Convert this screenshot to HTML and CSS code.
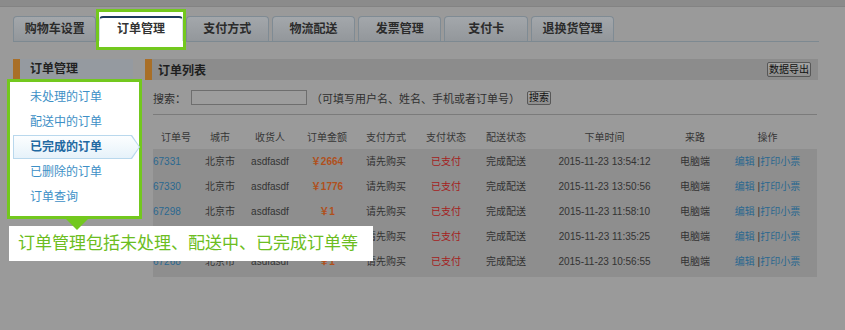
FILE: index.html
```html
<!DOCTYPE html>
<html lang="zh-CN">
<head>
    <meta charset="UTF-8">
    <title>订单管理</title>
    <link rel="stylesheet" href="styles.css">
</head>
<body>
    <div class="topbar"></div>

    <ul class="tabs">
        <li class="tab">购物车设置</li>
        <li class="tab-hl"><div class="tab on">订单管理</div></li>
        <li class="tab">支付方式</li>
        <li class="tab">物流配送</li>
        <li class="tab">发票管理</li>
        <li class="tab">支付卡</li>
        <li class="tab">退换货管理</li>
    </ul>

    <div class="main">
        <div class="side">
            <div class="side-hd">订单管理</div>
            <div class="guide">
                <ul class="menu">
                    <li><span>未处理的订单</span></li>
                    <li><span>配送中的订单</span></li>
                    <li class="cur"><span>已完成的订单</span></li>
                    <li><span>已删除的订单</span></li>
                    <li><span>订单查询</span></li>
                </ul>
                <div class="tip">订单管理包括未处理、配送中、已完成订单等</div>
            </div>
        </div>

        <div class="content">
            <div class="panel-hd">
                <span class="title">订单列表</span>
                <button class="btn">数据导出</button>
            </div>

            <div class="search">
                <span>搜索：</span>
                <input type="text">
                <span class="hint">（可填写用户名、姓名、手机或者订单号）</span>
                <button class="btn">搜索</button>
            </div>
            <div class="rule"></div>

            <table class="orders">
                <colgroup>
                    <col style="width:46px"><col style="width:42px"><col style="width:58px"><col style="width:56px"><col style="width:62px">
                    <col style="width:58px"><col style="width:62px"><col style="width:135px"><col style="width:46px"><col style="width:99px">
                </colgroup>
                <thead>
                    <tr>
                        <th>订单号</th><th>城市</th><th>收货人</th><th>订单金额</th><th>支付方式</th>
                        <th>支付状态</th><th>配送状态</th><th>下单时间</th><th>来路</th><th>操作</th>
                    </tr>
                </thead>
                <tbody>
                    <tr>
                        <td class="id"><a>67331</a></td><td>北京市</td><td>asdfasdf</td><td class="amt">￥2664</td><td>请先购买</td>
                        <td class="paid">已支付</td><td>完成配送</td><td>2015-11-23 13:54:12</td><td>电脑端</td>
                        <td class="ops"><a>编辑</a> |<a>打印小票</a></td>
                    </tr>
                    <tr>
                        <td class="id"><a>67330</a></td><td>北京市</td><td>asdfasdf</td><td class="amt">￥1776</td><td>请先购买</td>
                        <td class="paid">已支付</td><td>完成配送</td><td>2015-11-23 13:50:56</td><td>电脑端</td>
                        <td class="ops"><a>编辑</a> |<a>打印小票</a></td>
                    </tr>
                    <tr>
                        <td class="id"><a>67298</a></td><td>北京市</td><td>asdfasdf</td><td class="amt">￥1</td><td>请先购买</td>
                        <td class="paid">已支付</td><td>完成配送</td><td>2015-11-23 11:58:10</td><td>电脑端</td>
                        <td class="ops"><a>编辑</a> |<a>打印小票</a></td>
                    </tr>
                    <tr>
                        <td class="id"><a>67269</a></td><td>北京市</td><td>asdfasdf</td><td class="amt">￥1</td><td>请先购买</td>
                        <td class="paid">已支付</td><td>完成配送</td><td>2015-11-23 11:35:25</td><td>电脑端</td>
                        <td class="ops"><a>编辑</a> |<a>打印小票</a></td>
                    </tr>
                    <tr>
                        <td class="id"><a>67268</a></td><td>北京市</td><td>asdfasdf</td><td class="amt">￥1</td><td>请先购买</td>
                        <td class="paid">已支付</td><td>完成配送</td><td>2015-11-23 10:56:55</td><td>电脑端</td>
                        <td class="ops"><a>编辑</a> |<a>打印小票</a></td>
                    </tr>
                </tbody>
            </table>
        </div>
    </div>
</body>
</html>
```

FILE: styles.css
```css
body {
    margin: 0;
    background: #9a9a9a;
    font-family: "Liberation Sans", "Noto Sans CJK SC", sans-serif;
    font-size: 12px;
    color: #2e2e2e;
}

.topbar {
    height: 6px;
    background: #8b8b8b;
    border-bottom: 1px solid #838383;
}

/* Tabs */
.tabs {
    list-style: none;
    display: flex;
    gap: 3px;
    width: 806px;
    height: 25px;
    margin: 9px 0 0 13px;
    padding: 0;
    border-bottom: 1px solid #7d8991;
}

.tab {
    width: 83.3px;
    height: 25px;
    box-sizing: border-box;
    border: 1px solid #7f8b94;
    border-bottom: 0;
    border-radius: 4px 4px 0 0;
    background: linear-gradient(#a3a7ab, #93979b);
    text-align: center;
    line-height: 24px;
    font-weight: bold;
    color: #2b2b2b;
}

/* highlighted tab of the guide */
.tab-hl {
    position: relative;
    z-index: 2;
    margin: -7px -3px -9px;
    padding: 4px 0 6px;
    border: 3px solid #73c81e;
    background: #fff;
}

.tab.on {
    background: #fff;
    border-color: #d8dfe5;
    border-top: 2px solid #1d3b5e;
    line-height: 23px;
    color: #333;
}

/* Layout */
.main {
    display: flex;
    gap: 12px;
    margin: 17px 0 0 13px;
}

.side {
    width: 120px;
    flex: none;
}

.side-hd {
    height: 21px;
    line-height: 21px;
    padding-left: 10px;
    border-left: 7px solid #a96f27;
    background: #959aa0;
    font-weight: bold;
    color: #222;
}

.guide {
    position: relative;
    z-index: 5;
    margin: -1px -9px 0 -6px;
    padding: 3px 0 6px;
    border: 3px solid #73c81e;
    background: #fff;
}

.guide::after {
    content: '';
    position: absolute;
    left: 56px;
    top: calc(100% + 3px);
    border-left: 11px solid transparent;
    border-right: 11px solid transparent;
    border-top: 11px solid #73c81e;
}

.menu {
    list-style: none;
    margin: 0;
    padding: 0;
}

.menu li {
    position: relative;
    width: 127px;
    height: 24px;
    box-sizing: border-box;
    margin: 0 0 1px 3px;
    padding-left: 17px;
    line-height: 24px;
    color: #3d8fc6;
}

.menu li span {
    position: relative;
}

.menu li.cur {
    font-weight: bold;
    color: #1f69a2;
    background: #b9d8ed;
    clip-path: polygon(0 0, calc(100% - 8px) 0, 100% 50%, calc(100% - 8px) 100%, 0 100%);
}

.menu li.cur::before {
    content: '';
    position: absolute;
    inset: 1px;
    background: linear-gradient(#fcfeff, #e6f2fa);
    clip-path: polygon(0 0, calc(100% - 8px) 0, 100% 50%, calc(100% - 8px) 100%, 0 100%);
}

.tip {
    position: absolute;
    left: -1px;
    top: calc(100% + 10px);
    width: 364px;
    height: 35px;
    box-sizing: border-box;
    padding-left: 9px;
    background: #fff;
    line-height: 35px;
    font-size: 17px;
    color: #6cbd21;
    white-space: nowrap;
}

/* Order list */
.content {
    width: 673px;
    flex: none;
}

.panel-hd {
    display: flex;
    align-items: center;
    justify-content: space-between;
    height: 21px;
    padding: 0 7px 0 6px;
    border-left: 7px solid #a96f27;
    background: #8c8c8c;
}

.panel-hd .title {
    font-weight: bold;
    color: #1e1e1e;
}

.btn {
    height: 15px;
    padding: 0 1px;
    border: 1px solid #575757;
    border-radius: 2px;
    background: linear-gradient(#a4a4a4, #8e8e8e);
    font-family: "Liberation Sans", "Noto Sans CJK SC", sans-serif;
    font-size: 10px;
    line-height: 12px;
    color: #111;
}

.search {
    display: flex;
    align-items: center;
    height: 15px;
    margin: 10px 0 0 8px;
    font-size: 11px;
    color: #2f2f2f;
}

.search input {
    width: 116px;
    height: 15px;
    box-sizing: border-box;
    margin: 0 4px 0 5px;
    padding: 0;
    border: 1px solid #6e6e6e;
    background: #9d9d9d;
}

.search .hint {
    margin-right: 7px;
}

.search .btn {
    height: 14px;
}

.rule {
    margin: 9px 1px 0 8px;
    border-top: 1px solid #7b7b7b;
}

.orders {
    width: 664px;
    margin: 9px 0 0 8px;
    table-layout: fixed;
    border-collapse: collapse;
    font-size: 10px;
}

.orders th {
    height: 25px;
    padding: 0;
    font-weight: normal;
    color: #363636;
    text-align: center;
}

.orders tbody {
    background: #8e8e8e;
}

.orders td {
    height: 25px;
    padding: 0;
    line-height: 25px;
    vertical-align: top;
    text-align: center;
    color: #333;
    white-space: nowrap;
}

.orders tr:last-child td {
    height: 28px;
}

.orders td.id {
    text-align: left;
}

.orders td.id a,
.orders td.ops a {
    color: #2a6890;
}

.orders td.amt {
    font-weight: bold;
    color: #b0501c;
}

.orders td.paid {
    color: #a41d1d;
}
```
